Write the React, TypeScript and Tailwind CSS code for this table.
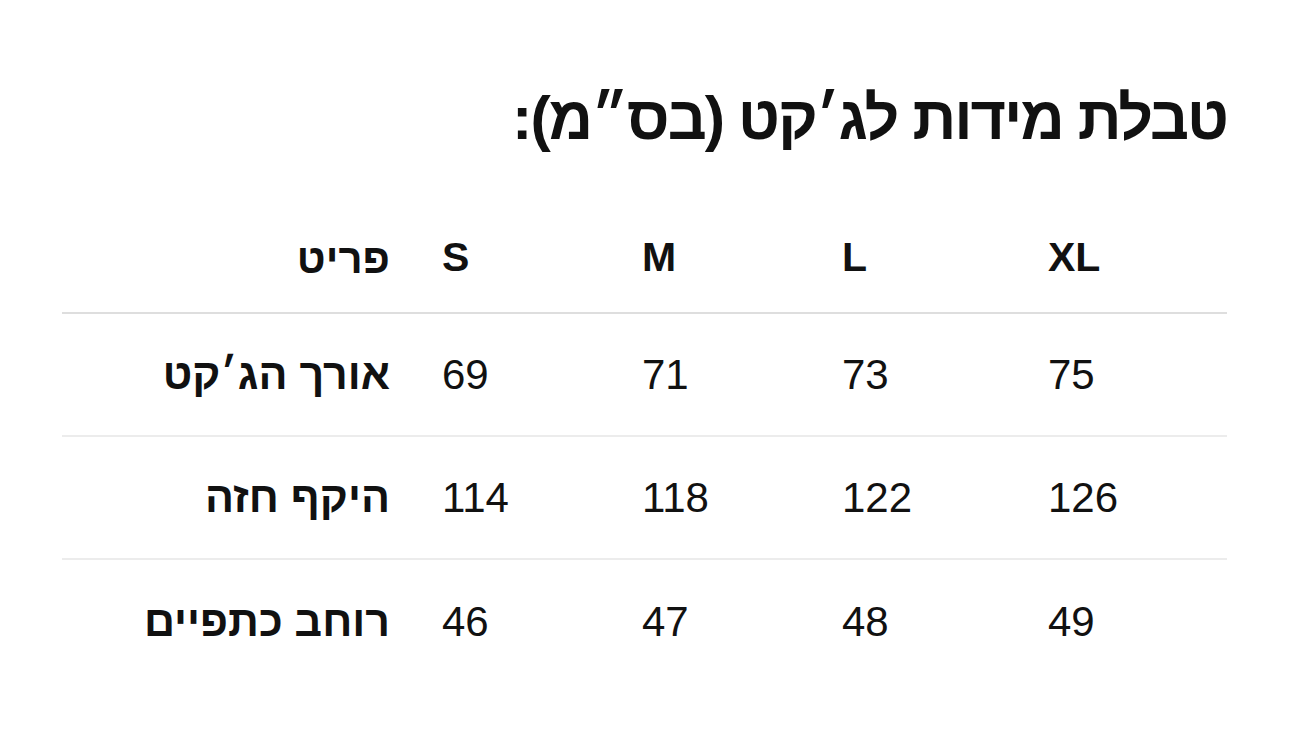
import React from "react";

const rows = [
  { label: "אורך הג׳קט", v: ["69", "71", "73", "75"] },
  { label: "היקף חזה", v: ["114", "118", "122", "126"] },
  { label: "רוחב כתפיים", v: ["46", "47", "48", "49"] },
];

const grid = "grid grid-cols-[354px_200px_200px_206px_205px]";

export default function App() {
  return (
    <div
      className="w-[1290px] h-[731px] bg-white text-[#111111] overflow-hidden"
      style={{ fontFamily: '"Liberation Sans", Arial, sans-serif' }}
    >
      <div className="pl-[62px] pr-[63px] pt-[78px]">
        <h1 dir="rtl" className="text-right text-[61px] font-bold leading-[80px] tracking-[-2px]">
          טבלת מידות לג׳קט (בס״מ):
        </h1>
        <div className="mt-[46px]">
          <div className={`${grid} h-[110px] items-center border-b-2 border-[#dedede]`}>
            <div dir="rtl" className="text-right pr-[26px] text-[42px] font-bold">פריט</div>
            {["S", "M", "L", "XL"].map((s) => (
              <div key={s} className="pl-[26px] text-[41px] font-bold">{s}</div>
            ))}
          </div>
          {rows.map((r, i) => (
            <div
              key={r.label}
              className={`${grid} h-[123px] items-center ${i < rows.length - 1 ? "border-b-2 border-[#ececec]" : ""}`}
            >
              <div dir="rtl" className="text-right pr-[26px] text-[43px] font-bold">{r.label}</div>
              {r.v.map((n, j) => (
                <div key={j} className="pl-[26px] text-[42px]">{n}</div>
              ))}
            </div>
          ))}
        </div>
      </div>
    </div>
  );
}
